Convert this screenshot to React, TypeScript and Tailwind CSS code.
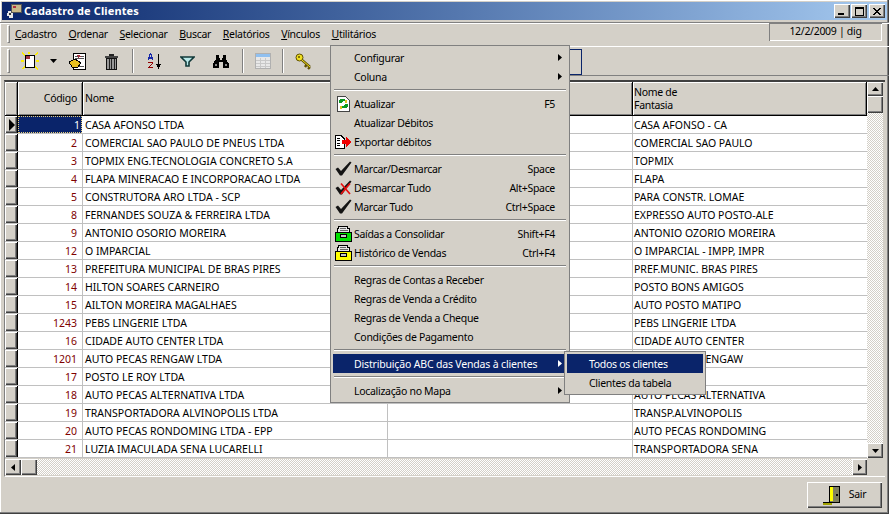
import React from "react";

const rows: [string, string, string][] = [
  ["1", "CASA AFONSO LTDA", "CASA AFONSO - CA"],
  ["2", "COMERCIAL SAO PAULO DE PNEUS LTDA", "COMERCIAL SAO PAULO"],
  ["3", "TOPMIX ENG.TECNOLOGIA CONCRETO S.A", "TOPMIX"],
  ["4", "FLAPA MINERACAO E INCORPORACAO LTDA", "FLAPA"],
  ["5", "CONSTRUTORA ARO LTDA - SCP", "PARA CONSTR. LOMAE"],
  ["8", "FERNANDES SOUZA & FERREIRA LTDA", "EXPRESSO AUTO POSTO-ALE"],
  ["9", "ANTONIO OSORIO MOREIRA", "ANTONIO OZORIO MOREIRA"],
  ["12", "O IMPARCIAL", "O IMPARCIAL - IMPP, IMPR"],
  ["13", "PREFEITURA MUNICIPAL DE BRAS PIRES", "PREF.MUNIC. BRAS PIRES"],
  ["14", "HILTON SOARES CARNEIRO", "POSTO BONS AMIGOS"],
  ["15", "AILTON MOREIRA MAGALHAES", "AUTO POSTO MATIPO"],
  ["1243", "PEBS LINGERIE LTDA", "PEBS LINGERIE LTDA"],
  ["16", "CIDADE AUTO CENTER LTDA", "CIDADE AUTO CENTER"],
  ["1201", "AUTO PECAS RENGAW LTDA", "AUTO PECAS RENGAW"],
  ["17", "POSTO LE ROY LTDA", "LE ROY"],
  ["18", "AUTO PECAS ALTERNATIVA LTDA", "AUTO PECAS ALTERNATIVA"],
  ["19", "TRANSPORTADORA ALVINOPOLIS LTDA", "TRANSP.ALVINOPOLIS"],
  ["20", "AUTO PECAS RONDOMING LTDA - EPP", "AUTO PECAS RONDOMING"],
  ["21", "LUZIA IMACULADA SENA LUCARELLI", "TRANSPORTADORA SENA"],
];

const raised = "shadow-[inset_1px_1px_0_#fff,inset_-1px_-1px_0_#404040,inset_-2px_-2px_0_#808080]";
const dither = "bg-[repeating-conic-gradient(#d4d0c8_0_25%,#ffffff_0_50%)] bg-[length:2px_2px]";

function Tri({ dir, color = "#000" }: { dir: "u" | "d" | "l" | "r"; color?: string }) {
  const p = { u: "0,4 7,4 3.5,0", d: "0,0 7,0 3.5,4", l: "4,0 4,7 0,3.5", r: "0,0 0,7 4,3.5" }[dir];
  const w = dir === "u" || dir === "d" ? 7 : 4;
  const h = dir === "u" || dir === "d" ? 4 : 7;
  return (
    <svg width={w} height={h} viewBox={`0 0 ${w} ${h}`}>
      <polygon points={p} fill={color} />
    </svg>
  );
}

function Check({ x }: { x?: boolean }) {
  return (
    <svg width="17" height="15" viewBox="0 0 17 15">
      <path d="M0.500 8 L3 6.500 L6 10 L15 0.500 L16.500 1.500 L7 14.500 L5 14.500 Z" fill="#141414" />
      {x && <path d="M6 3.500 L15 14 M15 3.500 L6 14" stroke="#e81010" strokeWidth="1.7" />}
    </svg>
  );
}

function Drawer({ color }: { color: string }) {
  return (
    <svg width="17" height="16" viewBox="0 0 17 16" shapeRendering="crispEdges">
      <path d="M3.500.5H12.500V2.500H14.500V6.500H2.500V2.500H3.500Z" fill="#e8e8e8" stroke="#000" />
      <path d="M5 2H11M5 4H13" stroke="#666" />
      <rect x="0.500" y="6.500" width="16" height="9" fill={color} stroke="#000" />
      <rect x="5.500" y="8.500" width="6" height="3" fill="#c8c8c8" stroke="#000" />
    </svg>
  );
}

function Refresh() {
  return (
    <svg width="13" height="16" viewBox="0 0 13 16" shapeRendering="crispEdges">
      <path d="M.5.5H8.500L12.500 4.500V15.500H.5Z" fill="#fff" stroke="#444" />
      <path d="M3 3H8V5H6L5 7H2V5Z" fill="#0a9a20" />
      <path d="M10 12H5V10H7L8 8H11V10Z" fill="#0a9a20" />
      <path d="M8 4H10V7H8Z" fill="#e0c020" />
      <path d="M3 10H5V13H3Z" fill="#e0c020" />
    </svg>
  );
}

function ExportIcon() {
  return (
    <svg width="18" height="14" viewBox="0 0 18 14" shapeRendering="crispEdges">
      <path d="M.5.5H6L9.5 4V13.5H.5Z" fill="#fff" stroke="#000" />
      <path d="M2 3H5M2 5H5M2 8H5M2 10H5" stroke="#000" />
      <path d="M7 5H11V2L17 7L11 12V9H7Z" fill="#f00000" />
    </svg>
  );
}

type Item =
  | { sep: true }
  | { label: string; key?: string; arrow?: boolean; icon?: React.ReactNode; active?: boolean };

const menu: Item[] = [
  { label: "Configurar", arrow: true },
  { label: "Coluna", arrow: true },
  { sep: true },
  { label: "Atualizar", key: "F5", icon: <Refresh /> },
  { label: "Atualizar Débitos" },
  { label: "Exportar débitos", icon: <ExportIcon /> },
  { sep: true },
  { label: "Marcar/Desmarcar", key: "Space", icon: <Check /> },
  { label: "Desmarcar Tudo", key: "Alt+Space", icon: <Check x /> },
  { label: "Marcar Tudo", key: "Ctrl+Space", icon: <Check /> },
  { sep: true },
  { label: "Saídas a Consolidar", key: "Shift+F4", icon: <Drawer color="#00e000" /> },
  { label: "Histórico de Vendas", key: "Ctrl+F4", icon: <Drawer color="#ffff00" /> },
  { sep: true },
  { label: "Regras de Contas a Receber" },
  { label: "Regras de Venda a Crédito" },
  { label: "Regras de Venda a Cheque" },
  { label: "Condições de Pagamento" },
  { sep: true },
  { label: "Distribuição ABC das Vendas à clientes", arrow: true, active: true },
  { sep: true },
  { label: "Localização no Mapa", arrow: true },
];

function MenuPopup() {
  return (
    <div className="absolute left-[330px] top-[45px] w-[240px] h-[358px] bg-[#d4d0c8] p-[3px] shadow-[inset_1px_1px_0_#808080,inset_-1px_-1px_0_#808080]">
      {menu.map((m, i) =>
        "sep" in m ? (
          <div key={i} className="h-[8px] flex flex-col justify-center px-[1px]">
            <div className="h-[1px] bg-[#808080]" />
            <div className="h-[1px] bg-white" />
          </div>
        ) : (
          <div key={i} className={`h-[19px] flex items-center ${m.active ? "bg-[#0a246a] text-white tracking-[-0.17px]" : ""}`}>
            <div className="w-[21px] flex justify-center shrink-0">{m.icon}</div>
            <div className="flex-1 whitespace-nowrap pt-[3px]">{m.label}</div>
            {m.key && <div className="pr-[12px] pt-[3px] whitespace-nowrap">{m.key}</div>}
            {m.arrow && (
              <div className="pr-[5px] flex items-center">
                <Tri dir="r" color={m.active ? "#fff" : "#000"} />
              </div>
            )}
          </div>
        )
      )}
    </div>
  );
}

function SubMenu() {
  return (
    <div className="absolute left-[564px] top-[351px] w-[142px] h-[44px] bg-[#d4d0c8] p-[3px] shadow-[inset_1px_1px_0_#808080,inset_-1px_-1px_0_#808080]">
      <div className="h-[19px] bg-[#0a246a] text-white flex items-center pl-[22px] pt-[3px]">Todos os clientes</div>
      <div className="h-[19px] flex items-center pl-[22px] pt-[3px]">Clientes da tabela</div>
    </div>
  );
}

function WinBtn({ children }: { children: React.ReactNode }) {
  return (
    <div className={`w-[16px] h-[14px] bg-[#d4d0c8] ${raised} flex items-center justify-center`}>{children}</div>
  );
}

function TBtn({ w, children }: { w: number; children?: React.ReactNode }) {
  return (
    <div className="flex items-center justify-center h-full shrink-0" style={{ width: w }}>
      {children}
    </div>
  );
}

function TSep() {
  return <div className="w-[2px] h-[24px] border-l border-l-[#808080] border-r border-r-white shrink-0" />;
}

function Toolbar() {
  return (
    <div className="h-[30px] flex items-center pl-[7px] border-t border-t-white mt-[1px] border-b border-b-[#808080] relative">
      <div className="w-[3px] h-[24px] border-l border-t border-white border-r border-b border-r-[#808080] border-b-[#808080] shrink-0" />
      <TBtn w={38}>
        <svg width="18" height="18" viewBox="0 0 18 18" shapeRendering="crispEdges" className="ml-[2px]">
          <path d="M4.500 3.500H13.500V15.500H4.500Z" fill="#fff" stroke="#000" />
          <path d="M5 4H9V7H5Z" fill="#a03040" />
          <path d="M1 1L4 3M17 1L14 3M1 17L4 15M17 17L14 15M0 9H3M15 9H18M8 0V2" stroke="#ffee00" strokeWidth="1.4" />
        </svg>
      </TBtn>
      <TBtn w={10}>
        <Tri dir="d" />
      </TBtn>
      <TBtn w={38}>
        <svg width="17" height="17" viewBox="0 0 17 17" shapeRendering="crispEdges">
          <path d="M4.500.5H16.500V16.500H4.500Z" fill="#fff" stroke="#000" />
          <path d="M6 3H15M6 5H15M9 13H15" stroke="#555" />
          <path d="M0 9L6 6L12 10L9 14H3Z" fill="#e8c020" stroke="#000" />
          <path d="M8 2L12 4M11 2L9 5" stroke="#a03040" />
        </svg>
      </TBtn>
      <TBtn w={30}>
        <svg width="13" height="17" viewBox="0 0 13 17" shapeRendering="crispEdges">
          <rect x="0" y="3" width="13" height="2" fill="#444" />
          <rect x="4" y="1" width="5" height="2" fill="#222" />
          <path d="M1.500 5.500H11.500V16.500H1.500Z" fill="#999" stroke="#111" />
          <path d="M4 6V16M6.500 6V16M9 6V16" stroke="#222" />
        </svg>
      </TBtn>
      <TBtn w={6} />
      <TSep />
      <TBtn w={41}>
        <svg width="16" height="16" viewBox="0 0 16 16" shapeRendering="crispEdges">
          <path d="M1 7L3.500 0L6 7M2 5H5" stroke="#1828a8" fill="none" strokeWidth="1.2" />
          <path d="M1 9H6V10L2 14H6V15H1V14L5 10H1Z" fill="#900000" />
          <path d="M11.500 1V13" stroke="#000" />
          <path d="M9 11H14L11.500 16Z" fill="#000" />
        </svg>
      </TBtn>
      <TBtn w={24}>
        <svg width="15" height="11" viewBox="0 0 15 11">
          <path d="M1 1H14L9 6V10H6V6Z" fill="#b8e8e8" stroke="#103838" strokeWidth="1.6" />
        </svg>
      </TBtn>
      <TBtn w={43}>
        <svg width="16" height="13" viewBox="0 0 16 13" shapeRendering="crispEdges">
          <path d="M3 0H6V3H7V5H9V3H10V0H13V4L16 9V13H10V7H6V13H0V9L3 4Z" fill="#000" />
          <rect x="2" y="9" width="2" height="2" fill="#888" />
          <rect x="12" y="9" width="2" height="2" fill="#888" />
        </svg>
      </TBtn>
      <TSep />
      <TBtn w={38}>
        <svg width="16" height="16" viewBox="0 0 16 16" shapeRendering="crispEdges">
          <rect x="0.500" y="0.500" width="15" height="15" fill="#e8e8e8" stroke="#b0b0b0" />
          <rect x="1" y="1" width="14" height="3" fill="#90c0f0" />
          <path d="M1 7H15M1 10H15M1 13H15M5 5V15M10 5V15" stroke="#c8c8c8" />
        </svg>
      </TBtn>
      <TSep />
      <TBtn w={38}>
        <svg width="17" height="17" viewBox="0 0 17 17">
          <circle cx="4.500" cy="4.500" r="3.500" fill="#f0e020" stroke="#605000" />
          <path d="M7 7L15 14M12 11L10 14M15 14L13 16" stroke="#605000" strokeWidth="2.400" fill="none" />
          <path d="M7 7L15 14" stroke="#f0e020" strokeWidth="1" />
          <circle cx="4" cy="4" r="1" fill="#605000" />
        </svg>
      </TBtn>
      <div className="absolute left-[400px] top-[2px] w-[182px] h-[26px] border border-[#0a246a]" />
    </div>
  );
}

function Grid() {
  const hdr = "bg-[#d4d0c8] shadow-[inset_1px_1px_0_#fff,inset_-1px_-1px_0_#808080] shrink-0 border-r border-black";
  return (
    <div className="mx-[4px] mt-[4px] h-[397px] border-t-2 border-t-[#404040] border-l border-l-[#808080] border-b border-b-white flex flex-col overflow-hidden bg-[#d4d0c8]">
      <div className="flex h-[34px] shrink-0">
        <div className="flex border-b border-black h-[34px] w-[862px] shrink-0">
          <div className={`${hdr} w-[13px]`} />
          <div className={`${hdr} w-[65px] flex items-center justify-end pr-[5px]`}>Código</div>
          <div className={`${hdr} w-[305px] flex items-center pl-[2px]`}>Nome</div>
          <div className={`${hdr} w-[245px]`} />
          <div className={`${hdr} w-[234px] flex items-center pl-[1px]`}>
            <span className="leading-[13px] block">Nome de<br />Fantasia</span>
          </div>
        </div>
        <div className={`w-[16px] flex flex-col h-[34px] ${dither}`}>
          <div className={`h-[14px] bg-[#d4d0c8] ${raised} flex items-center justify-center`}><Tri dir="u" /></div>
          <div className={`h-[17px] bg-[#d4d0c8] ${raised}`} />
        </div>
      </div>
      <div className="flex h-[342px] shrink-0">
        <div className="w-[862px] shrink-0 flex flex-col bg-white tracking-normal">
          {rows.map((r, i) => (
            <div key={i} className="flex h-[18px] shrink-0 border-b border-[#c0c0c0] leading-[18px]">
              <div className={`w-[13px] bg-[#d4d0c8] ${raised} border-r border-black flex items-center justify-center pl-[2px]`}>
                {i === 0 && (
                  <svg width="6" height="12" viewBox="0 0 6 12"><polygon points="0,0 6,6 0,12" fill="#000" /></svg>
                )}
              </div>
              {i === 0 ? (
                <div className="w-[64px] mr-[1px] bg-[#0a246a] text-white text-right pr-[2px] outline-1 -outline-offset-1 outline-dotted outline-[#e8d080]">{r[0]}</div>
              ) : (
                <div className="w-[65px] text-right pr-[5px] text-[#800000] border-r border-[#c0c0c0]">{r[0]}</div>
              )}
              <div className="w-[305px] pl-[2px] border-r border-[#c0c0c0] whitespace-nowrap text-black">{r[1]}</div>
              <div className="w-[245px] border-r border-[#c0c0c0]" />
              <div className="w-[234px] pl-[1px] whitespace-nowrap text-black">{r[2]}</div>
            </div>
          ))}
        </div>
        <div className={`w-[16px] flex flex-col justify-end ${dither}`}>
          <div className={`h-[15px] bg-[#d4d0c8] ${raised} flex items-center justify-center`}><Tri dir="d" /></div>
        </div>
      </div>
      <div className="h-[17px] flex shrink-0 pt-[1px]">
        <div className={`w-[862px] flex ${dither}`}>
          <div className={`w-[16px] bg-[#d4d0c8] ${raised} flex items-center justify-center`}><Tri dir="l" /></div>
          <div className={`w-[16px] bg-[#d4d0c8] ${raised}`} />
          <div className="flex-1" />
          <div className={`w-[15px] bg-[#d4d0c8] ${raised} flex items-center justify-center`}><Tri dir="r" /></div>
        </div>
        <div className="flex-1 bg-[#d4d0c8]" />
      </div>
    </div>
  );
}

export default function App() {
  return (
    <div className="relative w-[889px] h-[514px] overflow-hidden bg-[#d4d0c8] text-[10.5px] tracking-[-0.3px] text-black [font-family:'Noto_Sans',sans-serif] shadow-[inset_-1px_-1px_0_#404040,inset_-2px_-2px_0_#808080,inset_1px_1px_0_#fff] pt-[2px]">
      <div className="mx-[2px] h-[18px] bg-gradient-to-r from-[#0a246a] to-[#a6caf0] flex items-center pl-[4px] pr-[2px]">
        <svg width="17" height="16" viewBox="0 0 17 16" shapeRendering="crispEdges">
          <rect x="5.500" y="1.500" width="10" height="8" fill="#c8b888" stroke="#555" />
          <rect x="7" y="3" width="3" height="2" fill="#b03040" />
          <path d="M2 8H5V10H7V15H3V13H1V10H2Z" fill="#e8e8e8" />
          <path d="M3 10H5V12H3Z" fill="#333" />
        </svg>
        <span className="flex-1 font-bold text-white text-[11px] tracking-[0.12px] ml-[1px] pt-[1px]">Cadastro de Clientes</span>
        <div className="flex items-center">
          <WinBtn>
            <div className="w-[6px] h-[2px] bg-black mt-[6px] mr-[2px]" />
          </WinBtn>
          <div className="w-[1px]" />
          <WinBtn>
            <div className="w-[9px] h-[9px] border border-black border-t-2" />
          </WinBtn>
          <div className="w-[2px]" />
          <WinBtn>
            <svg width="8" height="7" viewBox="0 0 8 7" shapeRendering="crispEdges">
              <path d="M0 0L8 7M8 0L0 7" stroke="#000" strokeWidth="1.5" />
            </svg>
          </WinBtn>
        </div>
      </div>
      <div className="h-[23px] mt-[2px] border-t border-t-[#808080] flex items-center pl-[7px] relative">
        <div className="absolute inset-x-0 top-0 h-[1px] bg-white" />
        <div className="w-[3px] h-[18px] border-l border-t border-white border-r border-b border-r-[#808080] border-b-[#808080] mr-[5px]" />
        <div className="flex items-center gap-[11.7px] pt-[2px]">
          <span><u>C</u>adastro</span>
          <span><u>O</u>rdenar</span>
          <span><u>S</u>elecionar</span>
          <span><u>B</u>uscar</span>
          <span><u>R</u>elatórios</span>
          <span><u>V</u>ínculos</span>
          <span><u>U</u>tilitários</span>
        </div>
        <div className="absolute left-[769px] top-[0px] w-[113px] h-[18px] flex items-center justify-center shadow-[inset_1px_1px_0_#808080,inset_-1px_-1px_0_#fff]">12/2/2009 | dig</div>
      </div>
      <Toolbar />
      <Grid />
      <div className="flex justify-end pr-[7px] pt-[5px]">
        <div className={`w-[75px] h-[26px] flex items-center justify-center gap-[8px] bg-[#d4d0c8] ${raised}`}>
          <svg width="18" height="19" viewBox="0 0 18 19" shapeRendering="crispEdges">
            <path d="M6.500.5H16.500V16.500H6.500Z" fill="#808060" stroke="#000" />
            <path d="M7 1H10V15H7Z" fill="#ffff00" />
            <path d="M0 16H6" stroke="#000" />
            <path d="M0 18H9" stroke="#a0a000" strokeWidth="2" />
            <rect x="13" y="8" width="2" height="2" fill="#000" />
          </svg>
          <span>Sair</span>
        </div>
      </div>
      <MenuPopup />
      <SubMenu />
    </div>
  );
}
